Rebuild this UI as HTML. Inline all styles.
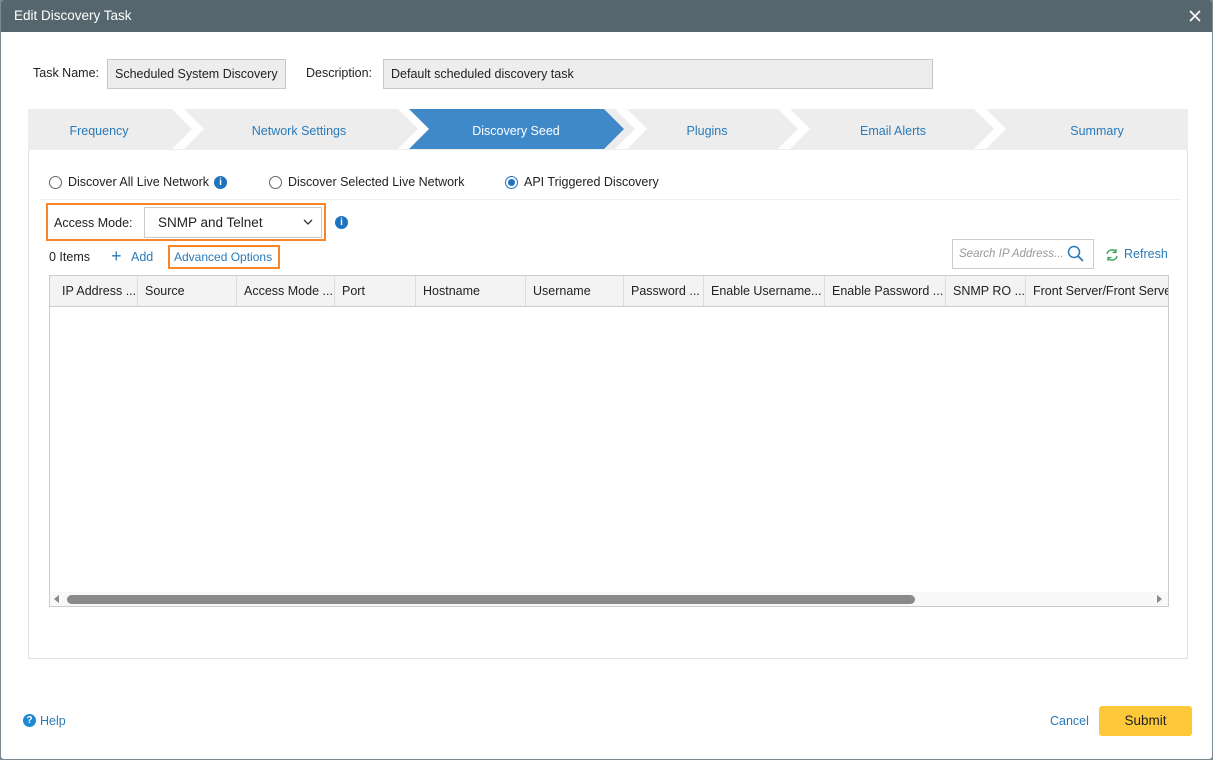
<!DOCTYPE html>
<html><head><meta charset="utf-8"><style>
*{box-sizing:border-box;margin:0;padding:0}
body{width:1213px;height:760px;background:#7d8a91;font-family:"Liberation Sans",sans-serif;font-size:12.5px;color:#222;position:relative;overflow:hidden}
.a{position:absolute}
.dlg{left:1px;top:0;width:1211px;height:759px;background:#fff;border-radius:3px;overflow:hidden}
.title{left:0;top:0;width:1211px;height:32px;background:#56666f;color:#fff;font-size:13.5px;line-height:32px;padding-left:13px}
.inp{background:#ededed;border:1px solid #c8c8c8;height:30px;line-height:28px;padding-left:7px;white-space:nowrap;overflow:hidden}
.blue{color:#2a7ab8}
.th{top:276px;height:30px;line-height:30px;padding-left:7px;border-right:1px solid #ddd;white-space:nowrap;overflow:hidden}
.radio{width:13px;height:13px;border:1px solid #666;border-radius:50%;top:176px}
</style></head><body>
<div class="a dlg">
<div class="a title">Edit Discovery Task<svg class="a" style="right:11px;top:10px" width="12" height="12"><path d="M1 1L11 11M11 1L1 11" stroke="#fff" stroke-width="1.6"/></svg></div>
<div class="a" style="left:32px;top:66px">Task Name:</div>
<div class="a inp" style="left:106px;top:59px;width:179px">Scheduled System Discovery</div>
<div class="a" style="left:305px;top:66px">Description:</div>
<div class="a inp" style="left:382px;top:59px;width:550px">Default scheduled discovery task</div>

<svg class="a" style="left:27px;top:109px" width="1160" height="41">
<rect width="1160" height="41" fill="#ededed"/>
<g fill="#fff">
<polygon points="144,0 156,0 176,20 156,40 144,40 164,20"/>
<polygon points="370,0 382,0 402,20 382,40 370,40 390,20"/>
<polygon points="750,0 762,0 782,20 762,40 750,40 770,20"/>
<polygon points="946,0 958,0 978,20 958,40 946,40 966,20"/>
</g>
<polygon points="381,0 576,0 596,20 576,40 381,40 401,20" fill="#4089c9"/>
<polygon points="587,0 599,0 619,20 599,40 587,40 607,20" fill="#fff"/>
<g font-family="Liberation Sans" font-size="12.5" text-anchor="middle" fill="#2a7ab8">
<text x="71" y="26">Frequency</text><text x="271" y="26">Network Settings</text>
<text x="488" y="26" fill="#fff">Discovery Seed</text><text x="679" y="26">Plugins</text>
<text x="865" y="26">Email Alerts</text><text x="1069" y="26">Summary</text></g>
</svg>
<div class="a" style="left:27px;top:150px;width:1160px;height:509px;border:1px solid #e2e2e2;border-top:none"></div>

<div class="a radio" style="left:48px"></div><div class="a" style="left:67px;top:175px">Discover All Live Network</div>
<div class="a" style="left:213px;top:176px;width:13px;height:13px;border-radius:50%;background:#1e73be;color:#fff;font-size:10px;font-weight:bold;text-align:center;line-height:13px">i</div>
<div class="a radio" style="left:268px"></div><div class="a" style="left:287px;top:175px">Discover Selected Live Network</div>
<div class="a radio" style="left:504px;border-color:#1e73be"><div class="a" style="left:2px;top:2px;width:7px;height:7px;border-radius:50%;background:#1e73be"></div></div>
<div class="a" style="left:523px;top:175px">API Triggered Discovery</div>
<div class="a" style="left:40px;top:199px;width:1140px;border-top:1px solid #eee"></div>

<div class="a" style="left:45px;top:203px;width:280px;height:38px;border:2px solid #f5872a"></div>
<div class="a" style="left:53px;top:216px">Access Mode:</div>
<div class="a" style="left:143px;top:207px;width:178px;height:31px;border:1px solid #ccc;font-size:13.5px;line-height:29px;padding-left:13px">SNMP and Telnet<svg class="a" style="right:8px;top:11px" width="10" height="7"><path d="M1 1L5 5L9 1" fill="none" stroke="#333" stroke-width="1.3"/></svg></div>
<div class="a" style="left:334px;top:216px;width:13px;height:13px;border-radius:50%;background:#1e73be;color:#fff;font-size:10px;font-weight:bold;text-align:center;line-height:13px">i</div>

<div class="a" style="left:48px;top:250px">0 Items</div>
<div class="a blue" style="left:110px;top:246px;font-size:18px">+</div><div class="a blue" style="left:130px;top:250px">Add</div>
<div class="a" style="left:167px;top:245px;width:112px;height:24px;border:2px solid #f5872a"></div>
<div class="a blue" style="left:173px;top:250px;font-size:12px">Advanced Options</div>
<div class="a" style="left:951px;top:239px;width:142px;height:30px;border:1px solid #ccc;color:#999;font-style:italic;font-size:11.5px;line-height:28px;padding-left:6px">Search IP Address...</div>
<svg class="a" style="left:1066px;top:245px" width="18" height="18"><circle cx="7" cy="7" r="5.5" fill="none" stroke="#2a7ab8" stroke-width="1.5"/><line x1="11" y1="11" x2="16" y2="16" stroke="#2a7ab8" stroke-width="1.8"/></svg>
<svg class="a" style="left:1104px;top:248px" width="14" height="14"><path d="M2 6A5 5 0 0 1 11 4M12 8A5 5 0 0 1 3 10" fill="none" stroke="#3aa55a" stroke-width="1.4"/><path d="M11 1v3.5h-3.5M3 13v-3.5h3.5" fill="none" stroke="#3aa55a" stroke-width="1.3"/></svg>
<div class="a blue" style="left:1123px;top:247px">Refresh</div>

<div class="a" style="left:48px;top:275px;width:1120px;height:332px;border:1px solid #ccc;overflow:hidden">
<div class="a" style="left:0;top:0;width:1120px;height:31px;background:#f3f3f3;border-bottom:1px solid #ccc"></div>
</div>
<div class="a th" style="left:54px;width:83px">IP Address ...</div>
<div class="a th" style="left:137px;width:99px">Source</div>
<div class="a th" style="left:236px;width:98px">Access Mode ...</div>
<div class="a th" style="left:334px;width:81px">Port</div>
<div class="a th" style="left:415px;width:110px">Hostname</div>
<div class="a th" style="left:525px;width:98px">Username</div>
<div class="a th" style="left:623px;width:80px">Password ...</div>
<div class="a th" style="left:703px;width:121px">Enable Username...</div>
<div class="a th" style="left:824px;width:121px">Enable Password ...</div>
<div class="a th" style="left:945px;width:80px">SNMP RO ...</div>
<div class="a th" style="left:1025px;width:142px;border:none">Front Server/Front Server</div>
<div class="a" style="left:49px;top:592px;width:1118px;height:14px;background:#f8f8f8"></div>
<div class="a" style="left:66px;top:595px;width:848px;height:9px;background:#8a8a8a;border-radius:5px"></div>
<div class="a" style="left:53px;top:595px;width:0;height:0;border:4px solid transparent;border-right:5px solid #888;border-left:none"></div>
<div class="a" style="left:1156px;top:595px;width:0;height:0;border:4px solid transparent;border-left:5px solid #888;border-right:none"></div>

<div class="a" style="left:22px;top:714px;width:13px;height:13px;border-radius:50%;background:#1e88d4;color:#fff;font-size:10px;font-weight:bold;text-align:center;line-height:13px">?</div>
<div class="a blue" style="left:39px;top:714px">Help</div>
<div class="a blue" style="left:1049px;top:714px">Cancel</div>
<div class="a" style="left:1098px;top:706px;width:93px;height:30px;background:#fdc93a;border-radius:3px;text-align:center;line-height:30px;font-size:13.5px">Submit</div>
</div>
</body></html>
